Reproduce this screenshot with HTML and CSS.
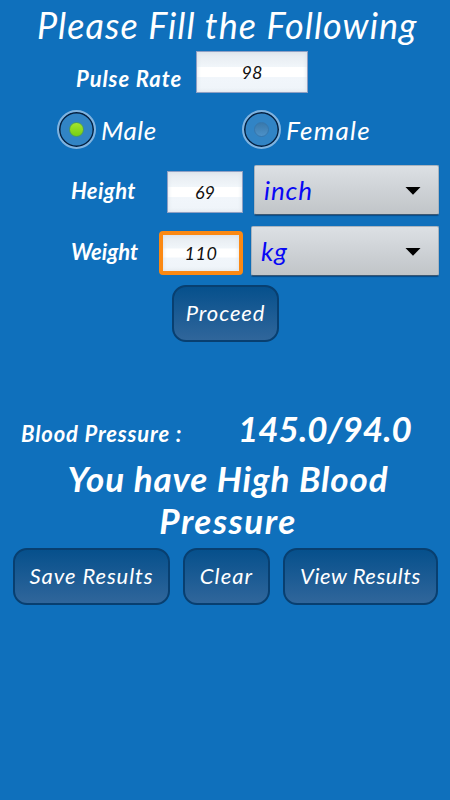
FILE: index.html
```html
<!DOCTYPE html>
<html lang="en">
<head>
    <meta charset="UTF-8">
    <meta name="viewport" content="width=device-width, initial-scale=1.0">
    <title>Blood Pressure</title>
    <link rel="stylesheet" href="styles.css">
</head>
<body>

    <h1>Please Fill the Following</h1>

    <div class="row pulse-row">
        <span class="label pulse-label">Pulse Rate</span>
        <div class="field pulse-field">98</div>
    </div>

    <div class="row gender-row">
        <div class="option male">
            <span class="radio checked"></span>
            <span class="option-text">Male</span>
        </div>
        <div class="option female">
            <span class="radio"></span>
            <span class="option-text female-text">Female</span>
        </div>
    </div>

    <div class="row height-row">
        <span class="label height-label">Height</span>
        <div class="field">69</div>
        <div class="spinner height-unit">
            <span class="unit">inch</span>
            <svg class="arrow" width="16" height="8" viewBox="0 0 16 8"><path d="M0.5 0h15L8 7.8z"/></svg>
        </div>
    </div>

    <div class="row weight-row">
        <span class="label weight-label">Weight</span>
        <div class="field focused">110</div>
        <div class="spinner weight-unit">
            <span class="unit unit-kg">kg</span>
            <svg class="arrow" width="16" height="8" viewBox="0 0 16 8"><path d="M0.5 0h15L8 7.8z"/></svg>
        </div>
    </div>

    <div class="btn proceed"><span>Proceed</span></div>

    <div class="row result-row">
        <span class="result-label">Blood Pressure :</span>
        <span class="result-value">145.0/94.0</span>
    </div>

    <div class="message">
        <span class="message-top">You have High Blood</span><br>
        <span class="message-bottom">Pressure</span>
    </div>

    <div class="row button-row">
        <div class="btn save"><span>Save Results</span></div>
        <div class="btn clear"><span>Clear</span></div>
        <div class="btn view"><span>View Results</span></div>
    </div>

</body>
</html>
```

FILE: styles.css
```css
* {
    box-sizing: border-box;
}
body {
    margin: 0;
    height: 800px;
    overflow: hidden;
    background-color: #0f70bc;
    color: white;
    font-family: Lato, "Open Sans", sans-serif;
    font-style: italic;
    white-space: nowrap;
}
h1 {
    margin: 0;
    padding: 3px 0 0 37px;
    height: 51px;
    font-size: 36px;
    font-weight: normal;
    line-height: 44px;
    letter-spacing: 1.05px;
}
.row {
    display: flex;
}
.label {
    font-size: 22px;
    font-weight: bold;
    line-height: 28px;
}
.pulse-row {
    height: 59px;
    padding-left: 76px;
}
.pulse-label {
    width: 120px;
    padding-top: 14px;
    letter-spacing: 0.9px;
}
.field {
    width: 76px;
    height: 42px;
    border: 1px solid #8fa0c4;
    background: linear-gradient(#e5eaef 0%, #f1f6fa 37%, #ffffff 38%, #ffffff 62%, #f1f6fb 63%, #eff4f9 100%);
    box-shadow: inset 0 0 4px #d8dfe6;
    color: #111;
    font-size: 18px;
    line-height: 41px;
    text-align: center;
}
.pulse-field {
    width: 112px;
}
.gender-row {
    height: 55px;
    padding-left: 57px;
}
.option {
    display: flex;
    width: 185px;
    gap: 5px;
}
.radio {
    display: flex;
    align-items: center;
    justify-content: center;
    width: 39px;
    height: 39px;
    border: 2px solid #80b3df;
    border-radius: 50%;
    background-color: #3184c5;
    box-shadow: inset 0 0 0 1.5px #06203f;
}
.radio::after {
    content: "";
    width: 13px;
    height: 13px;
    border: 1px solid #3677ad;
    border-radius: 50%;
    background: linear-gradient(#3979ab, #4d91c8);
}
.radio.checked::after {
    border-color: #4a9a62;
    background: linear-gradient(#a5e52c, #77cf13);
}
.option-text {
    padding-top: 1px;
    font-size: 26px;
    line-height: 39px;
    letter-spacing: 0.5px;
}
.female-text {
    letter-spacing: 1.3px;
}
.height-row {
    height: 61px;
    padding-left: 71px;
}
.height-row .field {
    margin-top: 6px;
}
.height-label {
    width: 96px;
    padding-top: 12px;
    letter-spacing: 0.4px;
}
.weight-row {
    height: 59px;
    padding-left: 71px;
}
.weight-label {
    width: 88px;
    padding-top: 12px;
}
.field.focused {
    width: 84px;
    height: 44px;
    margin-top: 5px;
    border: 4px solid #fb8913;
    border-radius: 4px;
    line-height: 36px;
    letter-spacing: 0.5px;
}
.spinner {
    display: flex;
    justify-content: space-between;
    height: 50px;
    padding: 0 17px 0 9px;
    border: 1px solid #a9b4bf;
    border-bottom-color: #3c5871;
    border-radius: 2px;
    background: linear-gradient(#dce0e4, #ced2d6 50%, #c1c5c8);
    box-shadow: 0 1px 1px #084b87;
    color: #0808f5;
}
.height-unit {
    width: 185px;
    margin-left: 11px;
}
.weight-unit {
    width: 188px;
    margin-left: 8px;
}
.unit {
    font-size: 26px;
    line-height: 48px;
    letter-spacing: 0.9px;
}
.arrow {
    margin-top: 21px;
    fill: #000;
}
.btn {
    height: 57px;
    border: 2px solid #083f70;
    border-radius: 14px;
    background: linear-gradient(#06508c, #30669b);
    font-size: 22px;
    line-height: 52px;
    text-align: center;
    letter-spacing: 0.9px;
}
.proceed {
    width: 107px;
    margin-left: 172px;
}
.result-row {
    height: 113px;
    padding: 65px 0 0 21px;
    align-items: baseline;
}
.result-label {
    width: 217px;
    font-size: 22px;
    font-weight: bold;
    letter-spacing: 0.85px;
}
.result-value {
    font-size: 35px;
    font-weight: bold;
    line-height: 42px;
}
.message {
    height: 93px;
    padding: 2px 0 0 6px;
    font-size: 35px;
    font-weight: bold;
    line-height: 42px;
    text-align: center;
}
.message-top {
    letter-spacing: 0.9px;
}
.message-bottom {
    letter-spacing: 1.5px;
}
.button-row {
    gap: 13px;
    padding-left: 13px;
}
.save {
    width: 157px;
}
.clear {
    width: 87px;
    letter-spacing: 1.1px;
}
.view {
    width: 155px;
    letter-spacing: 0.5px;
}
```
